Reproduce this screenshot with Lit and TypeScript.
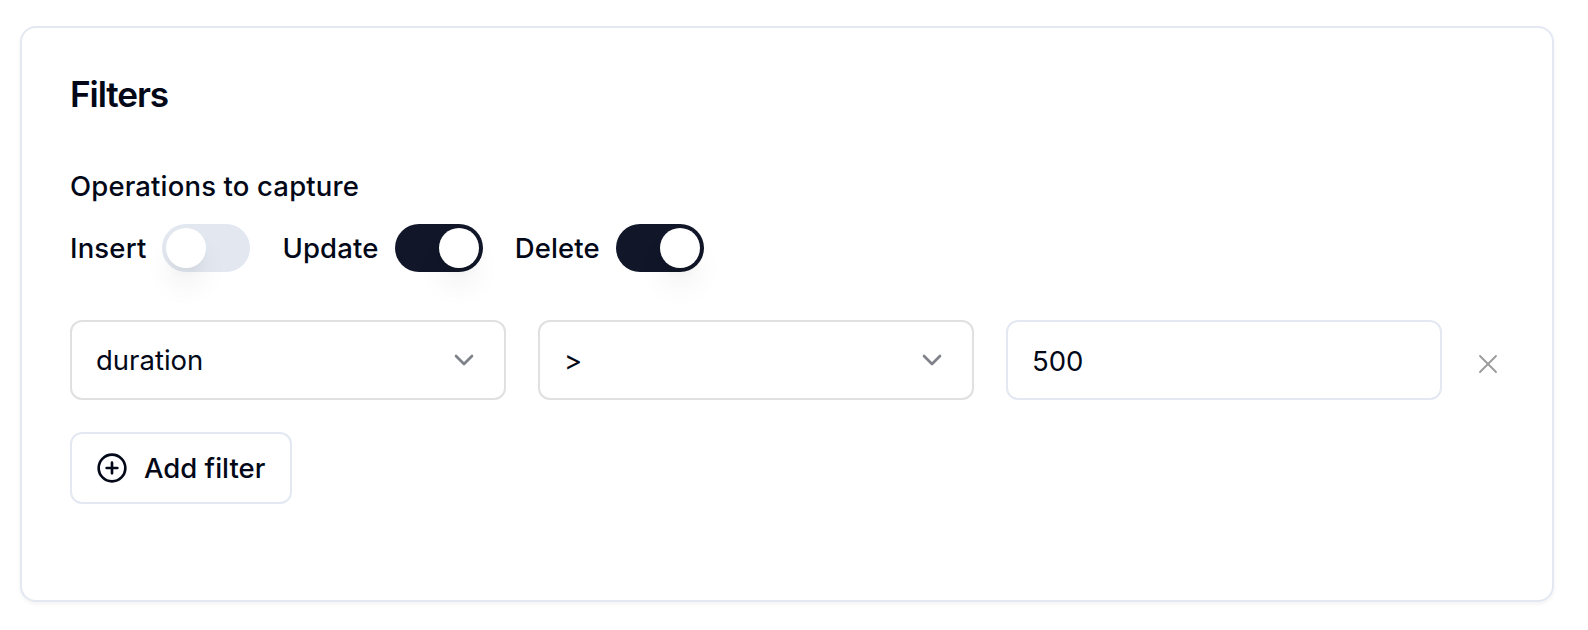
import { LitElement, html, css } from "lit";
import { customElement, property, state } from "lit/decorators.js";

const base = css`
  :host {
    display: block;
    box-sizing: border-box;
    color: #020817;
    font-family: Inter, "Liberation Sans", sans-serif;
  }
  *,
  *::before,
  *::after {
    box-sizing: border-box;
  }
`;

@customElement("toggle-switch")
export class ToggleSwitch extends LitElement {
  @property() label = "";
  @property({ type: Boolean }) on = false;

  static styles = [
    base,
    css`
      .field {
        display: flex;
        align-items: center;
        gap: 16px;
      }
      .label {
        font-size: 27.5px;
        line-height: 28px;
        font-weight: 450;
        letter-spacing: 0.16px;
      }
      .track {
        display: flex;
        width: 88px;
        height: 48px;
        padding: 4px;
        border: 0;
        border-radius: 24px;
        background: #e2e7f0;
      }
      .track.on {
        justify-content: flex-end;
        background: #111728;
      }
      .thumb {
        width: 40px;
        height: 40px;
        border-radius: 50%;
        background: #fff;
        box-shadow:
          0 20px 30px -3px rgb(0 0 0 / 0.07),
          0 8px 12px -4px rgb(0 0 0 / 0.04);
      }
    `,
  ];

  render() {
    return html`
      <div class="field">
        <span class="label">${this.label}</span>
        <button
          class="track ${this.on ? "on" : ""}"
          role="switch"
          aria-checked=${this.on}
          aria-label=${this.label}
          @click=${() => (this.on = !this.on)}
        >
          <span class="thumb"></span>
        </button>
      </div>
    `;
  }
}

@customElement("select-box")
export class SelectBox extends LitElement {
  @property() value = "";

  static styles = [
    base,
    css`
      .trigger {
        display: flex;
        align-items: center;
        justify-content: space-between;
        width: 100%;
        height: 80px;
        padding: 0 24px;
        border: 2px solid #e0e0e0;
        border-radius: 12px;
        background: #fff;
        color: inherit;
        font: 400 27.5px/40px Inter, "Liberation Sans", sans-serif;
      }
      .chevron {
        width: 32px;
        height: 32px;
        opacity: 0.5;
      }
    `,
  ];

  render() {
    return html`
      <button class="trigger" role="combobox">
        <span>${this.value}</span>
        <svg class="chevron" viewBox="0 0 24 24" fill="none" stroke="currentColor" stroke-width="2" stroke-linecap="round" stroke-linejoin="round">
          <path d="m6 9 6 6 6-6" />
        </svg>
      </button>
    `;
  }
}

@customElement("app-root")
export class AppRoot extends LitElement {
  @state() private operations = [
    { label: "Insert", on: false },
    { label: "Update", on: true },
    { label: "Delete", on: true },
  ];

  static styles = [
    base,
    css`
      :host {
        height: 630px;
        padding: 26px 34px 28px 20px;
        background: #fff;
      }
      .card {
        height: 576px;
        padding: 48px;
        border: 2px solid #e3e8f2;
        border-radius: 16px;
        background: #fff;
        box-shadow: 0 2px 4px rgb(0 0 0 / 0.05);
      }
      .title {
        margin: 0 0 60px;
        font-size: 35.2px;
        line-height: 36px;
        font-weight: 600;
        letter-spacing: -1.1px;
      }
      .caption {
        margin: 0 0 24px;
        font-size: 27.5px;
        line-height: 28px;
        font-weight: 450;
        letter-spacing: 0.15px;
      }
      .operations {
        display: flex;
        gap: 32px;
        margin-bottom: 48px;
      }
      .row {
        display: grid;
        grid-template-columns: repeat(3, 436px) 28px;
        column-gap: 32px;
        align-items: center;
        margin-bottom: 32px;
      }
      .input {
        width: 100%;
        height: 80px;
        padding: 2px 24px 0;
        border: 2px solid #e3e8f2;
        border-radius: 12px;
        outline: 0;
        background: #fff;
        color: inherit;
        font: 400 27.5px/40px Inter, "Liberation Sans", sans-serif;
      }
      .remove {
        display: flex;
        padding: 7px 0 0;
        border: 0;
        background: none;
        color: #999;
      }
      .remove svg {
        width: 28px;
        height: 28px;
      }
      .add {
        display: flex;
        align-items: center;
        gap: 16px;
        width: 222px;
        height: 72px;
        padding: 0 24px;
        border: 2px solid #e3e8f2;
        border-radius: 12px;
        background: #fff;
        color: inherit;
        font: 450 27.5px/40px Inter, "Liberation Sans", sans-serif;
        white-space: nowrap;
      }
      .add svg {
        flex: none;
        width: 32px;
        height: 32px;
      }
    `,
  ];

  render() {
    return html`
      <section class="card">
        <h3 class="title">Filters</h3>
        <p class="caption">Operations to capture</p>
        <div class="operations">
          ${this.operations.map(
            (op) => html`<toggle-switch .label=${op.label} .on=${op.on}></toggle-switch>`,
          )}
        </div>
        <div class="row">
          <select-box value="duration"></select-box>
          <select-box value=">"></select-box>
          <input class="input" aria-label="Value" .value=${"500"} />
          <button class="remove" aria-label="Remove filter">
            <svg viewBox="0 0 28 28" fill="none" stroke="currentColor" stroke-width="1.8" stroke-linecap="round">
              <path d="M6 6 22 22M22 6 6 22" />
            </svg>
          </button>
        </div>
        <button class="add">
          <svg viewBox="0 0 24 24" fill="none" stroke="currentColor" stroke-width="2" stroke-linecap="round" stroke-linejoin="round">
            <circle cx="12" cy="12" r="10" />
            <path d="M8 12h8M12 8v8" />
          </svg>
          <span>Add filter</span>
        </button>
      </section>
    `;
  }
}
